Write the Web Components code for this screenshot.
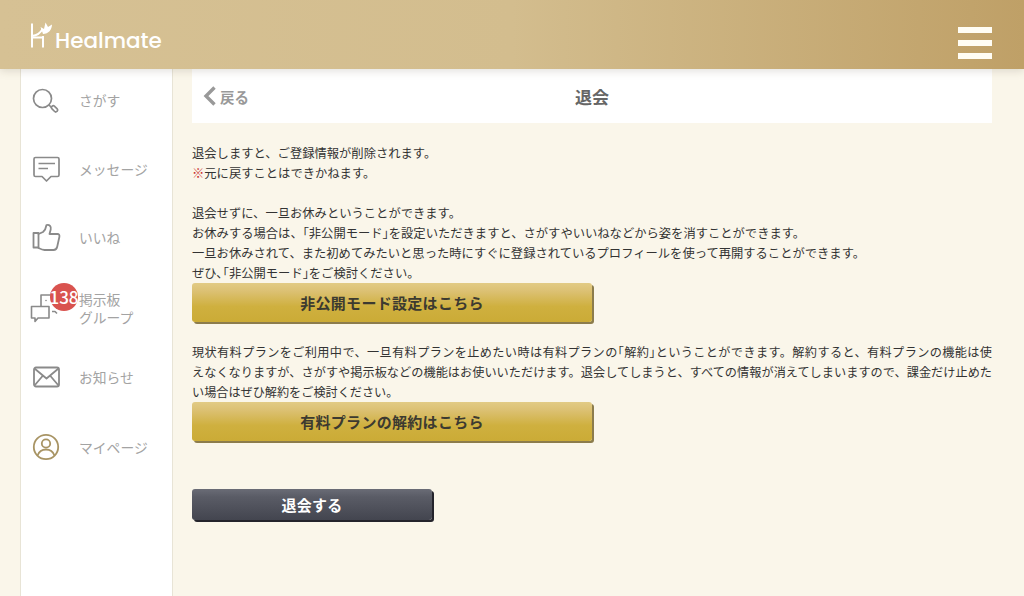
<!DOCTYPE html>
<html lang="ja">
<head>
<meta charset="utf-8">
<title>退会</title>
<style>
  html, body { margin: 0; height: 100%; }
  body {
    background: #faf6ea;
    color: #333;
    font-family: "Noto Sans CJK JP", "Noto Sans", sans-serif;
    overflow: hidden;
  }
  svg { display: block; overflow: visible; }
</style>
</head>
<body>
<app-shell>
  <app-header slot="header"></app-header>
  <side-nav slot="nav">
    <nav-item label="さがす" h="69">
      <svg slot="icon" width="28" height="28" viewBox="0 0 28 28" fill="none" stroke="#8a8a8a" stroke-width="1.7">
        <circle cx="9.500" cy="12.500" r="9"/>
        <path d="M16 19l2.500 2.500"/>
        <rect x="18" y="21" width="7" height="3.600" rx="1.500" transform="rotate(45 21.500 22.800)"/>
      </svg>
    </nav-item>
    <nav-item label="メッセージ" h="68">
      <svg slot="icon" width="28" height="28" viewBox="0 0 28 28" fill="none" stroke="#8a8a8a" stroke-width="1.7" stroke-linejoin="round">
        <path d="M2.500 2.500h22a1.500 1.500 0 0 1 1.500 1.500v16a1.500 1.500 0 0 1-1.500 1.500h-6.500l-4.500 4.500-4.500-4.500h-6.500a1.500 1.500 0 0 1-1.500-1.500v-16a1.500 1.500 0 0 1 1.500-1.500z"/>
        <path d="M5.500 8.500h16.500M5.500 13.500h9.500"/>
      </svg>
    </nav-item>
    <nav-item label="いいね" h="69">
      <svg slot="icon" width="28" height="28" viewBox="0 0 28 28" fill="none" stroke="#8a8a8a" stroke-width="1.8" stroke-linejoin="round" stroke-linecap="round">
        <path d="M.5 10h5v14.500h-5z"/>
        <path d="M5.500 11l4.500-2c1.800-1.500 3-4 3.500-7 3-.8 5 1.500 4.200 4.500l-1.200 4.500h8c1.500 0 2.200 1.200 1.900 2.800l-2.200 10c-.4 1.800-1.700 3.200-3.700 3.200h-9c-2 0-4-1-6-2"/>
      </svg>
    </nav-item>
    <nav-item label="掲示板<br>グループ" badge="138" h="71" tight>
      <svg slot="icon" width="28" height="28" viewBox="0 0 28 28" fill="none" stroke="#8a8a8a" stroke-width="1.6" stroke-linejoin="round">
        <path d="M8 12V1h16v14"/>
        <path d="M19 17.500h3l2 2"/>
        <path d="M-1.500 12.500h17.500v11.500h-11l-3 3.500v-3.500h-3.500z"/>
        <circle cx="13" cy="6.500" r=".8" fill="#8a8a8a" stroke="none"/>
      </svg>
    </nav-item>
    <nav-item label="お知らせ" h="70">
      <svg slot="icon" width="28" height="28" viewBox="0 0 28 28" fill="none" stroke="#8a8a8a" stroke-width="1.800" stroke-linejoin="round">
        <rect x="1" y="4.500" width="25" height="19" rx="2"/>
        <path d="M1.500 5.500l12 10 12-10M1.500 22.500l8.500-10M25.500 22.500l-8.500-10"/>
      </svg>
    </nav-item>
    <nav-item label="マイページ" h="69">
      <svg slot="icon" width="28" height="28" viewBox="0 0 28 28" fill="none" stroke="#a89464" stroke-width="1.800">
        <circle cx="13" cy="14" r="12.200"/>
        <circle cx="13" cy="10.500" r="4.200"/>
        <path d="M4.500 22.500c1.500-4 4.500-6 8.500-6s7 2 8.500 6"/>
      </svg>
    </nav-item>
  </side-nav>
  <page-title slot="title" back="戻る">退会</page-title>
  <text-block>退会しますと、ご登録情報が削除されます。<br><span style="color:#c9302c">※</span>元に戻すことはできかねます。</text-block>
  <text-block gap="20">退会せずに、一旦お休みということができます。<br>お休みする場合は、｢非公開モード｣を設定いただきますと、さがすやいいねなどから姿を消すことができます。<br>一旦お休みされて、また初めてみたいと思った時にすぐに登録されているプロフィールを使って再開することができます。<br>ぜひ､｢非公開モード｣をご検討ください。</text-block>
  <bevel-button gap="0" width="400">非公開モード設定はこちら</bevel-button>
  <text-block gap="20" fit>現状有料プランをご利用中で、一旦有料プランを止めたい時は有料プランの｢解約｣ということができます。解約すると、有料プランの機能は使<br>えなくなりますが、さがすや掲示板などの機能はお使いいただけます。退会してしまうと、すべての情報が消えてしまいますので、課金だけ止めた<br><span style="display:block;text-align-last:left">い場合はぜひ解約をご検討ください。</span></text-block>
  <bevel-button gap="0" width="400">有料プランの解約はこちら</bevel-button>
  <bevel-button gap="48" width="240" tone="dark">退会する</bevel-button>
</app-shell>

<script>
const html = (strings, ...values) => String.raw({ raw: strings }, ...values);

class Base extends HTMLElement {
  constructor() {
    super();
    this.attachShadow({ mode: 'open' });
  }
  connectedCallback() {
    this.shadowRoot.innerHTML = `<style>${this.styles()}</style>${this.render()}`;
  }
  styles() { return ''; }
  render() { return '<slot></slot>'; }
}

class AppShell extends Base {
  styles() {
    return html`
      :host { display: grid; grid-template-columns: 20px 153px 1fr; grid-template-rows: 69px 1fr; height: 596px; }
      .head { grid-column: 1 / -1; position: relative; z-index: 2; }
      .nav { grid-column: 2; }
      main { grid-column: 3; padding: 0 32px 0 19px; min-width: 0; }
    `;
  }
  render() {
    return html`
      <div class="head"><slot name="header"></slot></div>
      <div class="nav"><slot name="nav"></slot></div>
      <main>
        <slot name="title"></slot>
        <slot></slot>
      </main>
    `;
  }
}

class AppHeader extends Base {
  styles() {
    return html`
      :host {
        display: flex; align-items: center; justify-content: space-between;
        height: 69px; box-sizing: border-box; padding: 0 32px 0 30px;
        background: linear-gradient(90deg, #d6c194 0%, #d3bd8e 50%, #bfa067 100%);
        box-shadow: 0 2px 8px rgba(120, 110, 90, .22);
      }
      .logo { display: flex; align-items: flex-end; gap: 1px; color: #fff; }
      .word { font: 500 21.500px/24px Poppins, Lato, "Noto Sans", sans-serif; margin-bottom: -5px; }
      .menu { display: flex; flex-direction: column; gap: 7px; margin-top: 16px; }
      .menu i { display: block; width: 34px; height: 6px; background: #fffdf4; }
    `;
  }
  render() {
    return html`
      <div class="logo">
        <svg width="24" height="26" viewBox="0 0 24 26" fill="none" stroke="#fff" stroke-width="2">
          <path d="M2 1.500v24M13 14v11.500M2 15.500h11"/>
          <path d="M2 14c5-.5 8.500-3 10.500-7" stroke-width="1.800"/>
          <path d="M10.500 5l3.500 2 1.500-6.500 2.500 4.500 4-2.500c0 5-3.500 9.500-9 9.500z" fill="#fff" stroke="none"/>
        </svg>
        <span class="word">Healmate</span>
      </div>
      <div class="menu" aria-label="メニュー"><i></i><i></i><i></i></div>
    `;
  }
}

class SideNav extends Base {
  styles() {
    return html`
      :host {
        display: flex; flex-direction: column; height: 100%; box-sizing: border-box;
        background: #fff; border-left: 1px solid #e8e4d6; border-right: 1px solid #e8e4d6;
      }
    `;
  }
}

class NavItem extends Base {
  styles() {
    return html`
      :host { display: block; height: ${this.getAttribute('h')}px; flex: none; }
      .row {
        position: relative; display: flex; align-items: center; box-sizing: border-box;
        height: 62px; padding-left: 12px;
      }
      .icon { width: 28px; height: 28px; flex: none; }
      .label { margin-left: 18px; font-size: 13.800px; line-height: 18px; color: #a3a3a3; }
      .badge {
        position: absolute; left: 29px; top: 8px; width: 28px; height: 28px; border-radius: 50%;
        display: flex; align-items: center; justify-content: center;
        background: #d9534f; color: #fff; font-size: 17px; font-weight: 500; line-height: 28px; white-space: nowrap;
      }
      :host([tight]) .row { height: 66px; }
    `;
  }
  render() {
    const badge = this.getAttribute('badge');
    return html`
      <div class="row">
        <div class="icon"><slot name="icon"></slot></div>
        <div class="label">${this.getAttribute('label')}</div>
        ${badge ? `<span class="badge">${badge}</span>` : ''}
      </div>
    `;
  }
}

class PageTitle extends Base {
  styles() {
    return html`
      :host {
        display: grid; grid-template-columns: 1fr auto 1fr; align-items: center;
        height: 54px; background: #fff; margin-bottom: 20px;
      }
      .back { display: flex; align-items: center; gap: 3px; padding-left: 10px; color: #999; font-size: 14.500px; font-weight: 700; }
      .name { font-size: 17px; font-weight: 700; color: #666; }
    `;
  }
  render() {
    return html`
      <div class="back">
        <svg width="15" height="20" viewBox="0 0 15 20" fill="none" stroke="#999" stroke-width="3.400"><path d="M12.500 1.500L4 10l8.500 8.500"/></svg>
        ${this.getAttribute('back')}
      </div>
      <div class="name"><slot></slot></div>
      <div></div>
    `;
  }
}

class TextBlock extends Base {
  styles() {
    const gap = this.getAttribute('gap') || 0;
    return html`
      :host { display: block; margin-top: ${gap}px; font-size: 12.300px; line-height: 20px; color: #333; }
      :host([fit]) { font-size: 12.150px; text-align: justify; text-align-last: justify; }
    `;
  }
}

class BevelButton extends Base {
  styles() {
    const dark = this.getAttribute('tone') === 'dark';
    const fill = dark
      ? 'linear-gradient(#6a6c76 0%, #5a5c66 25%, #43454f 100%)'
      : 'linear-gradient(#e2cb85 0%, #dcc174 20%, #cfb03f 60%, #cbab36 100%)';
    return html`
      :host { display: block; margin-top: ${this.getAttribute('gap') || 0}px; width: ${this.getAttribute('width')}px; }
      button {
        display: block; width: 100%; height: 39px; padding: 0; border: 0; border-radius: 3px;
        font: 700 15px/39px "Noto Sans CJK JP", sans-serif; letter-spacing: .3px;
        color: ${dark ? '#fff' : '#3c3a30'};
        background: ${fill};
        box-shadow: 2px 2px 0 ${dark ? '#24242c' : '#8c7c4c'};
        ${dark ? 'height: 31px; line-height: 31px;' : ''}
      }
    `;
  }
  render() {
    return '<button type="button"><slot></slot></button>';
  }
}

customElements.define('app-shell', AppShell);
customElements.define('app-header', AppHeader);
customElements.define('side-nav', SideNav);
customElements.define('nav-item', NavItem);
customElements.define('page-title', PageTitle);
customElements.define('text-block', TextBlock);
customElements.define('bevel-button', BevelButton);
</script>
</body>
</html>
